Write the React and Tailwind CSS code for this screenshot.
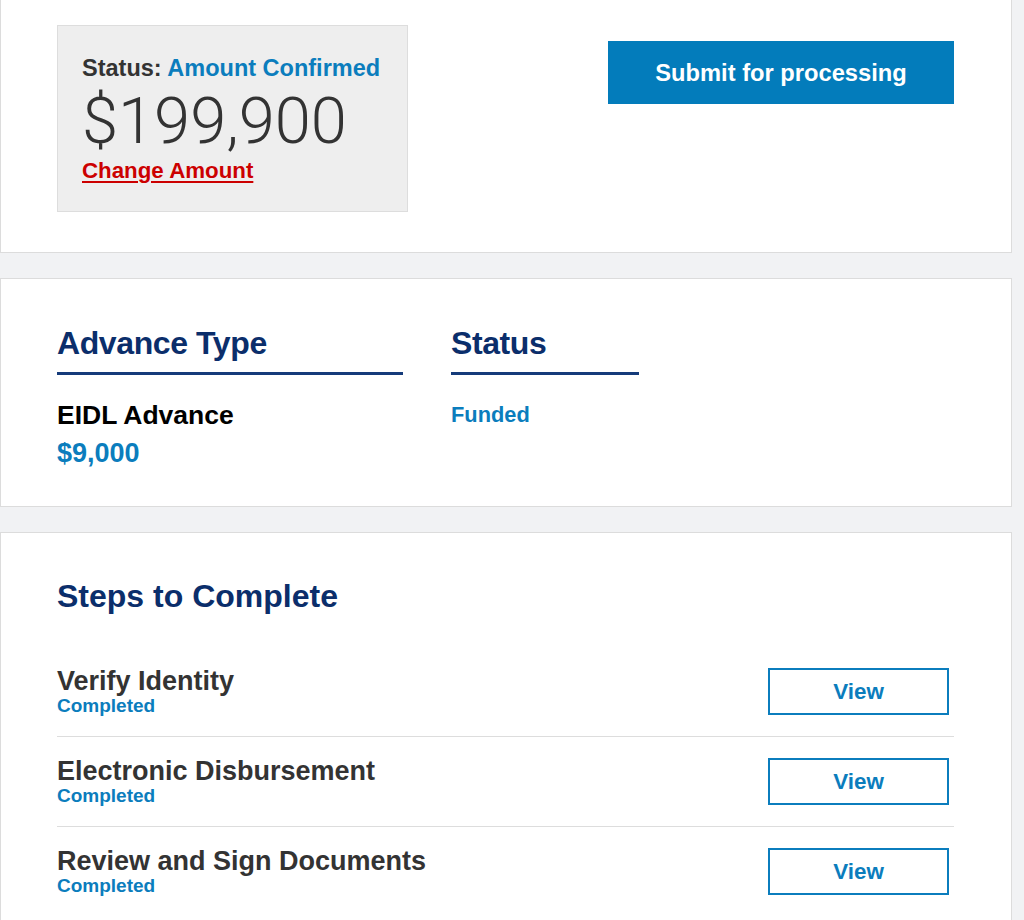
import React from 'react';

const steps = [
  { name: 'Verify Identity', status: 'Completed' },
  { name: 'Electronic Disbursement', status: 'Completed' },
  { name: 'Review and Sign Documents', status: 'Completed' },
];

const font = { fontFamily: '"Liberation Sans", Arial, sans-serif' };

const App = () => {
  return (
    <div className="min-h-[920px] bg-[#f1f2f4] pr-[12px]" style={font}>
      {/* amount card */}
      <div className="bg-white border border-t-0 border-[#dcdcdc] pt-[25px] pb-[40px] pl-[56px] pr-[57px] flex justify-between items-start">
        <div className="w-[351px] bg-[#eeeeee] border border-[#dddddd] pl-[24px] pt-[28px] pb-[28px]">
          <p className="text-[23.5px] leading-[28px] font-bold text-[#333333]">
            Status: <span className="text-[#0b7dbd]">Amount Confirmed</span>
          </p>
          <p
            className="mt-[7px] text-[65px] leading-[64px] font-light text-[#333333]"
            style={{ fontFamily: 'Roboto, "Liberation Sans", sans-serif' }}
          >
            $199,900
          </p>
          <a href="#" className="block mt-[6px] text-[22.3px] leading-[24px] font-bold text-[#cc0000] underline underline-offset-[3px]">
            Change Amount
          </a>
        </div>
        <button className="mt-[16px] w-[346px] h-[63px] pt-[3px] bg-[#037cbb] text-white text-[23.7px] font-bold">
          Submit for processing
        </button>
      </div>

      {/* advance card */}
      <div className="mt-[25px] bg-white border border-[#dcdcdc] pt-[46px] pb-[38px] px-[56px] flex gap-[48px]">
        <div className="w-[346px]">
          <h2 className="text-[32px] leading-[36px] font-bold text-[#0b2e6b] pb-[11px] border-b-[3px] border-[#153b7a] tracking-[-0.4px]">
            Advance Type
          </h2>
          <p className="mt-[25px] text-[26.5px] leading-[30px] font-bold text-black">EIDL Advance</p>
          <p className="mt-[8px] text-[27px] leading-[30px] font-bold text-[#0b7dbd]">$9,000</p>
        </div>
        <div className="w-[188px]">
          <h2 className="text-[32px] leading-[36px] font-bold text-[#0b2e6b] pb-[11px] border-b-[3px] border-[#153b7a] tracking-[-0.4px]">
            Status
          </h2>
          <p className="mt-[25px] text-[21.8px] leading-[30px] font-bold text-[#0b7dbd]">Funded</p>
        </div>
      </div>

      {/* steps card */}
      <div className="mt-[25px] bg-white border border-b-0 border-[#dcdcdc] pt-[45px] pl-[56px] pr-[57px] pb-[20px]">
        <h2 className="text-[32px] leading-[36px] font-bold text-[#0b2e6b]">Steps to Complete</h2>
        <div className="mt-[33px]">
          {steps.map((step, i) => (
            <div
              key={step.name}
              className={`flex justify-between items-center py-[20px] ${i < steps.length - 1 ? 'border-b border-[#dddddd]' : ''}`}
            >
              <div>
                <p className="text-[27px] leading-[28px] font-bold text-[#333333]">{step.name}</p>
                <p className="text-[19px] leading-[21px] font-bold text-[#0b7dbd]">{step.status}</p>
              </div>
              <button className="mr-[5px] w-[181px] h-[47px] border-2 border-[#0b7dbd] bg-white text-[#0b7dbd] text-[22.4px] font-bold">
                View
              </button>
            </div>
          ))}
        </div>
      </div>
    </div>
  );
};

export default App;
